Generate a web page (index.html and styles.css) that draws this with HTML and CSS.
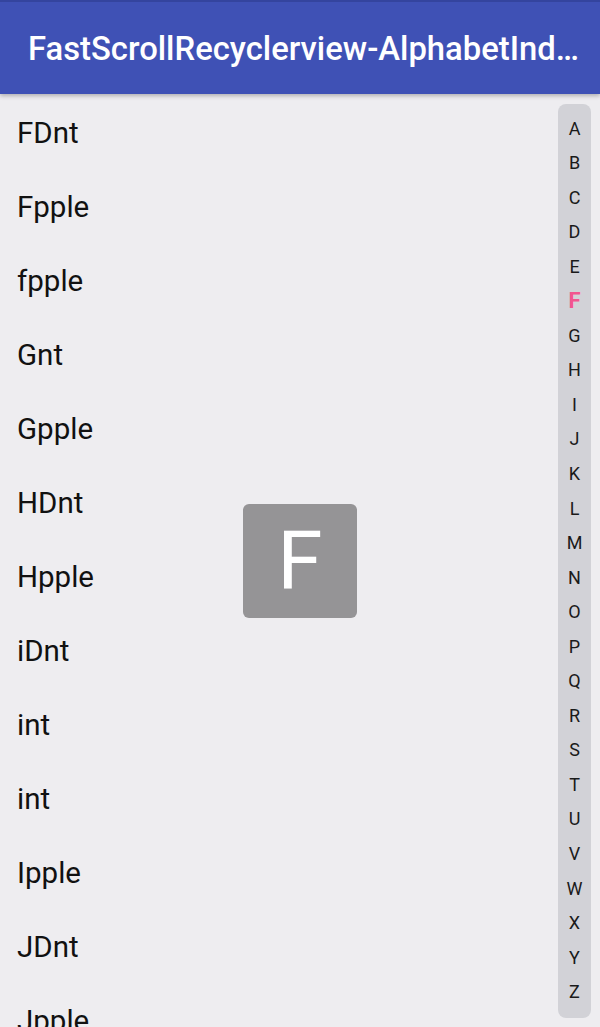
FILE: index.html
```html
<!DOCTYPE html>
<html>
<head>
<meta charset="utf-8">
<link rel="stylesheet" href="styles.css">
</head>
<body>
<div class="screen">
  <header class="appbar">
    <div class="title">FastScrollRecyclerview-AlphabetIndexer</div>
  </header>
  <main class="content">
    <ul class="list">
      <li>FDnt</li>
      <li>Fpple</li>
      <li>fpple</li>
      <li>Gnt</li>
      <li>Gpple</li>
      <li>HDnt</li>
      <li>Hpple</li>
      <li>iDnt</li>
      <li>int</li>
      <li>int</li>
      <li>Ipple</li>
      <li>JDnt</li>
      <li>Jpple</li>
    </ul>
    <div class="index">
      <span>A</span><span>B</span><span>C</span><span>D</span><span>E</span><span class="active">F</span><span>G</span><span>H</span><span>I</span><span>J</span><span>K</span><span>L</span><span>M</span><span>N</span><span>O</span><span>P</span><span>Q</span><span>R</span><span>S</span><span>T</span><span>U</span><span>V</span><span>W</span><span>X</span><span>Y</span><span>Z</span>
    </div>
    <div class="preview">F</div>
  </main>
</div>
</body>
</html>
```
FILE: styles.css
```css
html, body {
  margin: 0;
  padding: 0;
}
body {
  width: 600px;
  height: 1027px;
  overflow: hidden;
  background: #eeedf0;
  font-family: Roboto, "Noto Sans", sans-serif;
}
.screen {
  display: flex;
  flex-direction: column;
  height: 1027px;
}
.appbar {
  position: relative;
  z-index: 2;
  height: 94px;
  flex: none;
  background: #3f51b5;
  border-top: 2px solid #34449e;
  box-sizing: border-box;
  display: flex;
  align-items: center;
  padding: 0 14px 0 28px;
  box-shadow: 0 2px 4px rgba(0,0,0,0.25);
}
.title {
  color: #fff;
  font-size: 32.8px;
  font-weight: 500;
  white-space: nowrap;
  overflow: hidden;
  text-overflow: ellipsis;
  margin-top: 2px;
}
.content {
  position: relative;
  flex: 1;
  overflow: hidden;
}
.list {
  list-style: none;
  margin: 0;
  padding: 2px 0 0 0;
}
.list li {
  height: 74px;
  display: flex;
  align-items: center;
  padding-left: 17px;
  font-size: 29.5px;
  color: #111;
}
.index {
  position: absolute;
  top: 10px;
  left: 558px;
  width: 33px;
  height: 914px;
  background: #d2d2d7;
  border-radius: 8px;
  display: flex;
  flex-direction: column;
  align-items: center;
  padding-top: 7.5px;
  box-sizing: border-box;
}
.index span {
  height: 34.55px;
  line-height: 34.55px;
  font-size: 18px;
  color: #1a1a1a;
  flex: none;
}
.index span.active {
  color: #f2558f;
  font-weight: 700;
  font-size: 22px;
}
.preview {
  position: absolute;
  left: 243px;
  top: 410px;
  width: 114px;
  height: 114px;
  border-radius: 6px;
  background: #959496;
  color: #fff;
  font-size: 82px;
  display: flex;
  align-items: center;
  justify-content: center;
}
```
